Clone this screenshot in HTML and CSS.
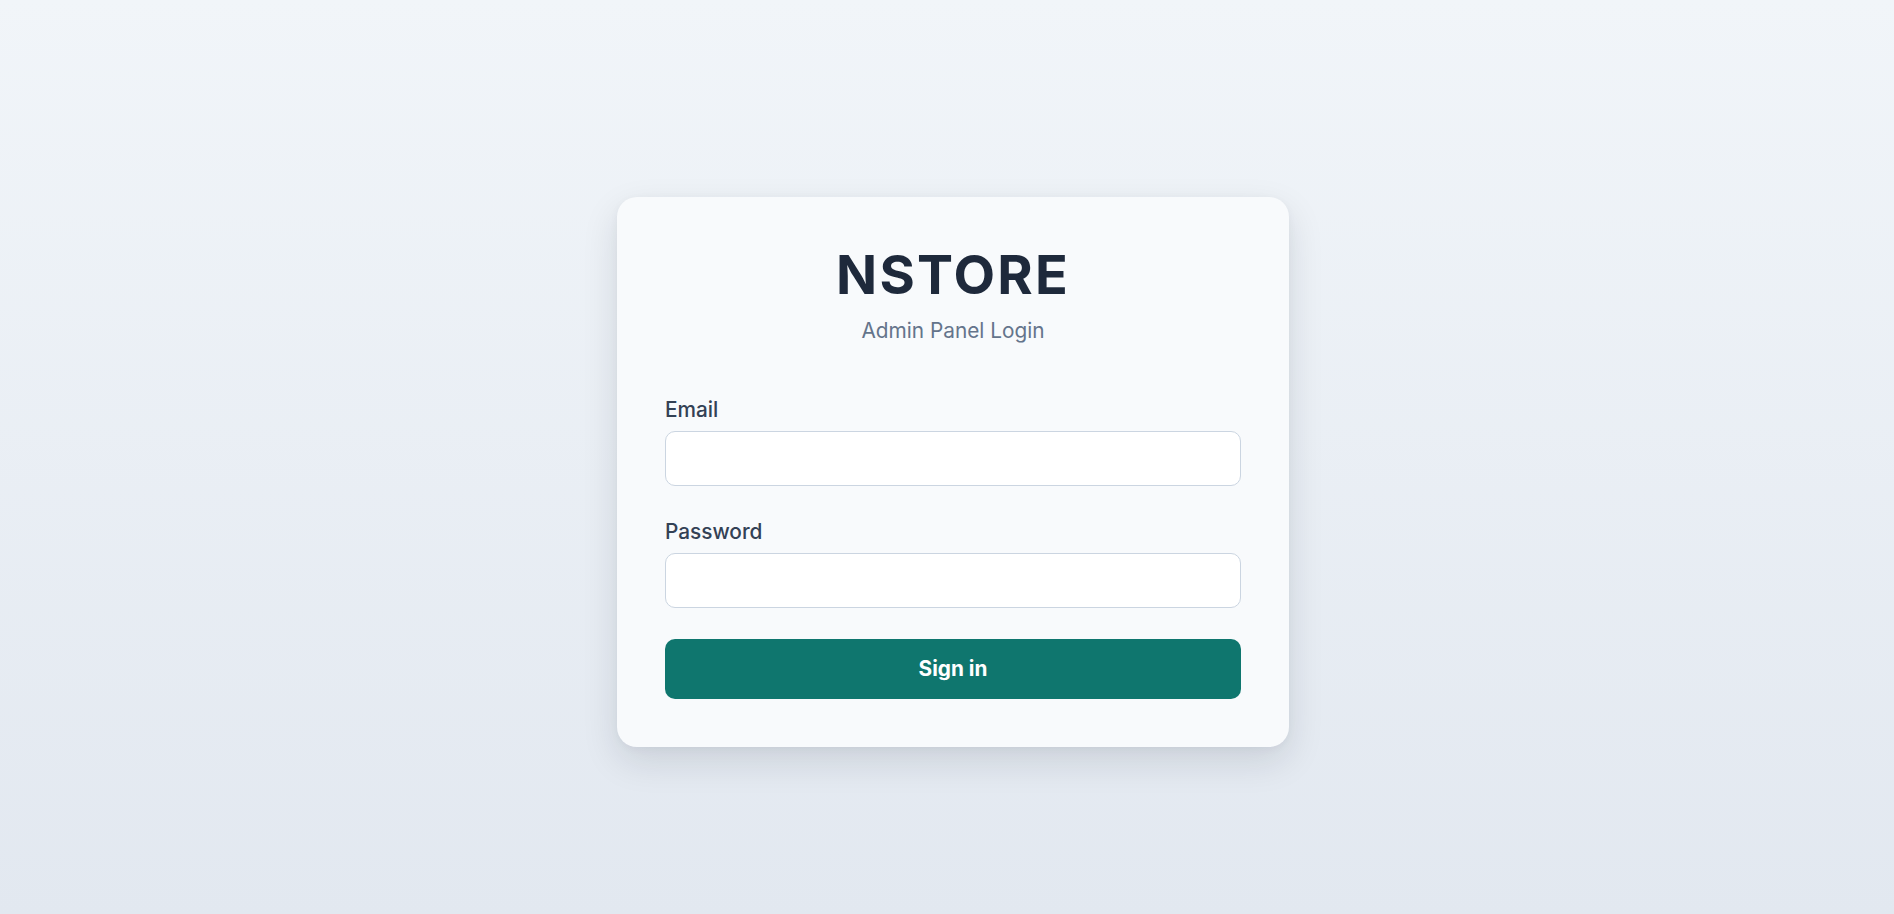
FILE: index.html
```html
<!DOCTYPE html>
<html lang="en">
<head>
<meta charset="utf-8">
<title>NSTORE Admin Login</title>
<link rel="stylesheet" href="styles.css">
</head>
<body>
<main class="page">
  <section class="card">
    <header class="card-header">
      <h1 class="brand">NSTORE</h1>
      <p class="subtitle">Admin Panel Login</p>
    </header>
    <form class="form">
      <div class="field">
        <label class="label" for="email">Email</label>
        <input class="input" id="email" type="email">
      </div>
      <div class="field">
        <label class="label" for="password">Password</label>
        <input class="input" id="password" type="password">
      </div>
      <button class="btn" type="button">Sign in</button>
    </form>
  </section>
</main>
</body>
</html>
```
FILE: styles.css
```css
* { box-sizing: border-box; }
html, body { margin: 0; padding: 0; }
body {
  font-family: Inter, "Noto Sans", "Liberation Sans", sans-serif;
  background: linear-gradient(180deg, #f1f5f9 0%, #e2e8f0 100%);
  min-height: 100vh;
}
.page {
  min-height: 100vh;
  display: flex;
  align-items: center;
  justify-content: center;
  padding: 30px 0 0 12px;
}
.card {
  width: 672px;
  background: #f8fafc;
  border-radius: 20px;
  padding: 48px;
  box-shadow: 0 14px 36px rgba(15, 23, 42, 0.12), 0 2px 8px rgba(15, 23, 42, 0.04);
}
.card-header {
  text-align: center;
  margin-bottom: 53.8px;
}
.brand {
  margin: 0;
  font-size: 54px;
  line-height: 60px;
  font-weight: 700;
  letter-spacing: 2.2px;
  color: #1e293b;
}
.subtitle {
  margin: 12.85px 0 0;
  font-size: 20.8px;
  color: #64748b;
}
.form { display: flex; flex-direction: column; }
.field {
  display: flex;
  flex-direction: column;
  margin-bottom: 32.55px;
}
.field + .field { margin-bottom: 30.95px; }
.label {
  font-size: 20.8px;
  font-weight: 500;
  color: #334155;
  margin-bottom: 9.26px;
}
.input {
  height: 55px;
  width: 100%;
  border: 1px solid #cbd5e1;
  border-radius: 10px;
  background: #ffffff;
  padding: 0 16px;
  font-family: inherit;
  font-size: 20.8px;
}
.btn {
  height: 60px;
  width: 100%;
  border: 0;
  border-radius: 10px;
  background: #0f766e;
  color: #ffffff;
  font-family: inherit;
  font-size: 20.8px;
  font-weight: 700;
  cursor: pointer;
}
```
